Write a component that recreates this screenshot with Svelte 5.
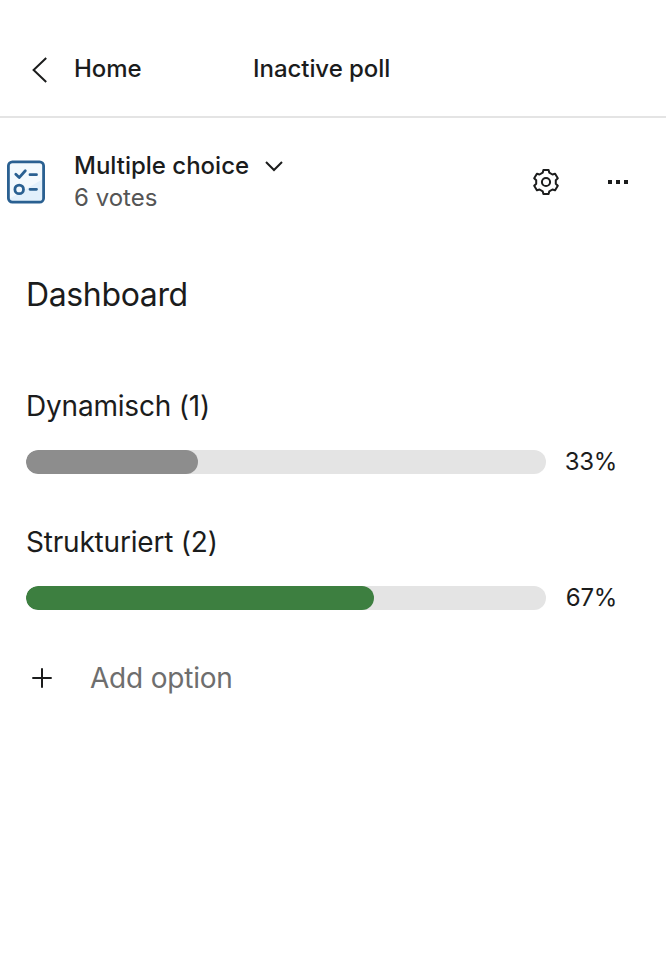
<script>
  const options = [
    { label: 'Dynamisch', votes: 1, percent: 33, color: '#8d8d8d' },
    { label: 'Strukturiert', votes: 2, percent: 67, color: '#3d7f40' }
  ];
</script>

<main>
  <header>
    <button class="home" aria-label="Back to home">
      <svg width="20" height="28" viewBox="0 0 20 28"><path d="M16.2 2 L3.6 14 L16.2 26" /></svg>
      <span>Home</span>
    </button>
    <h1>Inactive poll</h1>
  </header>

  <section class="summary">
    <svg class="poll" width="40" height="44" viewBox="0 0 40 44">
      <rect x="2.4" y="1.8" width="35.2" height="40.4" rx="4" fill="#f3f9fd" />
      <path d="M37 19 V41.5 H3 V39 Z" fill="#e2f0fb" />
      <rect class="line" x="2.4" y="1.8" width="35.2" height="40.4" rx="4" />
      <path class="line" d="M9.8 14.3 L13.2 17.6 L19.3 10.7 M24 14.7 H30.5 M24 29.3 H30.5" />
      <circle class="line" cx="13.2" cy="29.4" r="4.3" />
    </svg>
    <div class="info">
      <button class="kind">
        <span>Multiple choice</span>
        <svg width="20" height="14" viewBox="0 0 20 14"><path d="M2 3 L10 11 L18 3" /></svg>
      </button>
      <p>6 votes</p>
    </div>
    <div class="actions">
      <button aria-label="Settings">
        <svg width="28" height="28" viewBox="-14 -14 28 28">
          <path d="M-2.6 -12 H2.6 L3.3 -9.3 L6.4 -7.5 L9.1 -8.3 L11.8 -3.8 L9.8 -1.8 V1.8 L11.8 3.8 L9.1 8.3 L6.4 7.5 L3.3 9.3 L2.6 12 H-2.6 L-3.3 9.3 L-6.4 7.5 L-9.1 8.3 L-11.8 3.8 L-9.8 1.8 V-1.8 L-11.8 -3.8 L-9.1 -8.3 L-6.4 -7.5 L-3.3 -9.3 Z" />
          <circle r="4.1" />
        </svg>
      </button>
      <button aria-label="More">
        <svg width="20" height="4" viewBox="0 0 20 4"><path class="dots" d="M0 0h4v4H0z M8 0h4v4H8z M16 0h4v4h-4z" /></svg>
      </button>
    </div>
  </section>

  <section class="results">
    <h2>Dashboard</h2>
    {#each options as option}
      <div class="option">
        <h3>{option.label} ({option.votes})</h3>
        <div class="row">
          <div class="track">
            <div class="fill" style:width="{option.percent}%" style:background={option.color}></div>
          </div>
          <span>{option.percent}%</span>
        </div>
      </div>
    {/each}
    <button class="add">
      <svg width="20" height="20" viewBox="0 0 20 20"><path d="M10 0.3 V19.7 M0.3 10 H19.7" /></svg>
      <span>Add option</span>
    </button>
  </section>
</main>

<style>
  :global(body) { background: #fff; }
  main {
    box-sizing: border-box;
    width: 100%;
    height: 976px;
    background: #fff;
    color: #1b1c1c;
    font-family: Inter, sans-serif;
    overflow: hidden;
  }
  h1, h2, h3, p { margin: 0; font-weight: 400; }
  button {
    display: flex;
    align-items: center;
    margin: 0;
    padding: 0;
    border: 0;
    background: none;
    color: inherit;
    font: inherit;
  }
  svg {
    display: block;
    flex: none;
    fill: none;
    stroke: #1b1c1c;
    stroke-width: 2;
    overflow: visible;
  }
  header {
    display: flex;
    align-items: center;
    box-sizing: border-box;
    height: 118px;
    padding: 24px 0 0 30px;
    border-bottom: 2px solid #e4e4e4;
    font-size: 24px;
    font-weight: 500;
    line-height: 32px;
    letter-spacing: -0.05px;
  }
  .home { width: 223px; gap: 24px; letter-spacing: -0.1px; }
  header span, h1 { position: relative; top: -1px; }
  h1 { font-size: 24px; font-weight: 500; line-height: 32px; }
  .summary {
    display: flex;
    align-items: center;
    height: 128px;
    padding: 0 38px 0 6px;
  }
  .poll { stroke: none; }
  .line {
    stroke: #2a6091;
    stroke-width: 2.8;
    stroke-linecap: round;
    stroke-linejoin: round;
  }
  .info { flex: 1; padding-left: 28px; font-size: 24px; line-height: 32px; }
  .kind { gap: 15px; font-weight: 500; }
  .info p { color: #555; }
  .actions { display: flex; align-items: center; gap: 48px; }
  .actions svg { stroke-linejoin: round; }
  .actions .dots { fill: #1b1c1c; stroke: none; }
  .results { padding: 29px 50px 0 26px; }
  h2 { font-size: 32px; line-height: 40px; margin-bottom: 71px; letter-spacing: -0.36px; }
  .option { height: 136px; }
  h3 { font-size: 28px; line-height: 40px; letter-spacing: -0.2px; }
  .row { display: flex; align-items: center; height: 32px; margin-top: 20px; }
  .track {
    flex: none;
    width: 520px;
    height: 24px;
    border-radius: 12px;
    background: #e4e4e4;
    overflow: hidden;
  }
  .fill { height: 100%; border-radius: 12px; }
  .row span {
    flex: 1;
    margin-right: -1px;
    font-size: 24px;
    line-height: 32px;
    letter-spacing: -0.3px;
    text-align: right;
  }
  .add {
    gap: 38px;
    padding-left: 6px;
    color: #6e6e6e;
    font-size: 28px;
    line-height: 40px;
    letter-spacing: -0.2px;
  }
</style>
